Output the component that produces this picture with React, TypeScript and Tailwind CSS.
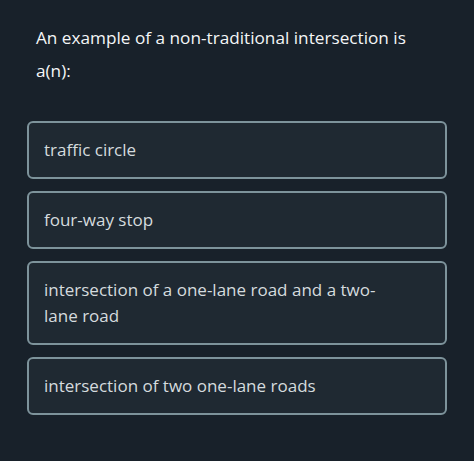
export default function App() {
  const options = [
    "traffic circle",
    "four-way stop",
    "intersection of a one-lane road and a two-lane road",
    "intersection of two one-lane roads",
  ];

  return (
    <div
      className="w-[474px] h-[461px] bg-[#18212a] px-[27px] pt-[21px]"
      style={{ fontFamily: "'Open Sans', Lato, sans-serif" }}
    >
      <h1 className="px-[9px] text-[17.2px] leading-[33px] text-[#f4f6f7]">
        An example of a non-traditional intersection is a(n):
      </h1>
      <div className="mt-[34px] flex flex-col gap-[12px]">
        {options.map((opt) => (
          <div
            key={opt}
            className="rounded-[6px] border-2 border-[#7d939b] bg-[#1f2932] pl-[15px] pr-[44px] py-[14px] text-[17px] leading-[26px] text-[#d5dbde]"
          >
            {opt}
          </div>
        ))}
      </div>
    </div>
  );
}
